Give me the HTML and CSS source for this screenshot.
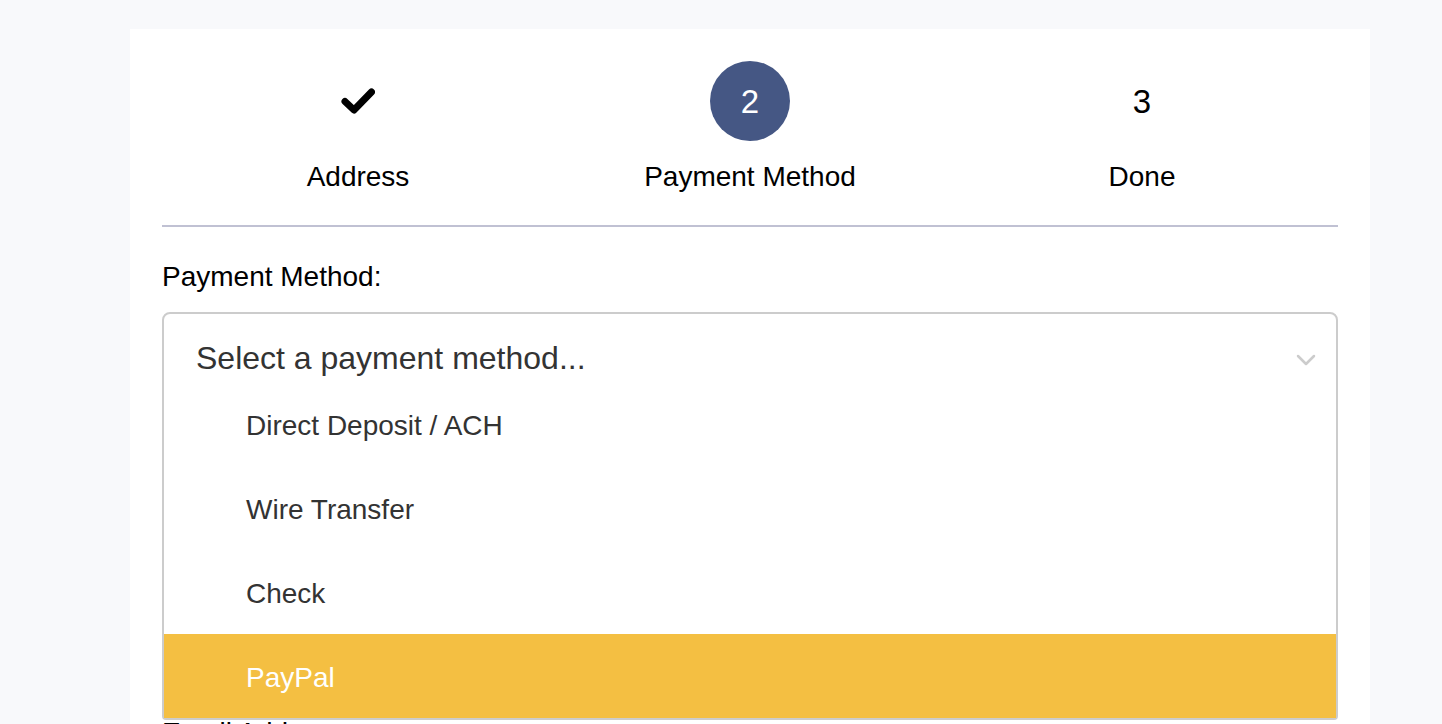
FILE: index.html
```html
<!DOCTYPE html>
<html lang="en">
<head>
	<meta charset="UTF-8">
	<title>Checkout - Payment Method</title>
	<link rel="stylesheet" href="styles.css">
</head>

<body>
	<div class="page">
		<div class="checkout">
			<!-- 步骤条 -->
			<ol class="steps">
				<li class="step step-done">
					<span class="step-mark">
						<svg width="34" height="26" viewBox="0 0 34 26">
							<polyline points="4,13.5 13,22 30.5,4" fill="none" stroke="#000" stroke-width="7" stroke-linecap="round" stroke-linejoin="round"/>
						</svg>
					</span>
					<span class="step-label">Address</span>
				</li>
				<li class="step step-active">
					<span class="step-mark">2</span>
					<span class="step-label">Payment Method</span>
				</li>
				<li class="step">
					<span class="step-mark">3</span>
					<span class="step-label">Done</span>
				</li>
			</ol>

			<form class="checkout-form" onsubmit="return false;">
				<div class="field field-payment">
					<label class="field-label">Payment Method:</label>
					<div class="select is-open">
						<div class="select-control">
							<span class="select-placeholder">Select a payment method...</span>
							<svg class="select-arrow" width="20" height="12" viewBox="0 0 20 12">
								<polyline points="2,2 10,10 18,2" fill="none" stroke="#ccc" stroke-width="2.5" stroke-linecap="round" stroke-linejoin="round"/>
							</svg>
						</div>
						<ul class="select-menu">
							<li class="select-option">Direct Deposit / ACH</li>
							<li class="select-option">Wire Transfer</li>
							<li class="select-option">Check</li>
							<li class="select-option is-focused">PayPal</li>
						</ul>
					</div>
				</div>

				<div class="field">
					<label class="field-label">Email Address:</label>
					<input type="email" class="field-input">
				</div>
			</form>
		</div>
	</div>
</body>
</html>
```

FILE: styles.css
```css
body {
	margin: 0;
	padding: 0;
	background: #f8f9fb;
	font-family: "Liberation Sans", Arial, sans-serif;
	color: #000;
}

.page {
	padding: 29px 72px 0 130px;
}

.checkout {
	background: #fff;
	padding: 32px;
	min-height: 900px;
}

/* 步骤条 */
.steps {
	display: grid;
	grid-template-columns: repeat(3, 1fr);
	margin: 0;
	padding: 0 0 32px;
	list-style: none;
	border-bottom: 2px solid #c0c1d3;
}

.step {
	display: flex;
	flex-direction: column;
	align-items: center;
}

.step-mark {
	width: 80px;
	height: 80px;
	display: flex;
	align-items: center;
	justify-content: center;
	border-radius: 50%;
	font-size: 33px;
	line-height: 1;
}

.step-active .step-mark {
	background: #455784;
	color: #fff;
}

.step-label {
	margin-top: 20px;
	font-size: 28px;
	line-height: 32px;
}

/* 表单 */
.checkout-form {
	margin: 0;
}

.field {
	margin-top: 34px;
}

.field-payment {
	margin-bottom: 313px;
}

.field-payment + .field {
	margin-top: 0;
}

.field-label {
	display: block;
	font-size: 28px;
	line-height: 32px;
	margin-bottom: 19px;
}

.field-input {
	width: 100%;
	height: 92px;
	box-sizing: border-box;
	border: 2px solid #ccc;
	border-radius: 8px;
	font-size: 28px;
}

/* 下拉框 */
.select {
	position: relative;
}

.select-control {
	height: 92px;
	box-sizing: border-box;
	display: flex;
	align-items: center;
	justify-content: space-between;
	padding: 0 20px 0 32px;
	border: 2px solid #ccc;
	border-radius: 8px;
	background: #fff;
}

.select-placeholder {
	font-size: 32px;
	color: #333;
}

.select-arrow {
	margin-top: 4px;
}

.select-menu {
	position: absolute;
	top: 70px;
	left: 0;
	right: 0;
	z-index: 10;
	margin: 0;
	padding: 0;
	list-style: none;
	background: #fff;
	border: 2px solid #ccc;
	border-top: none;
	border-radius: 0 0 4px 4px;
}

.select-option {
	height: 84px;
	box-sizing: border-box;
	display: flex;
	align-items: center;
	padding: 4px 0 0 82px;
	font-size: 28px;
	color: #333;
}

.select-option.is-focused {
	background: #f4bf42;
	color: #fff;
}
```
